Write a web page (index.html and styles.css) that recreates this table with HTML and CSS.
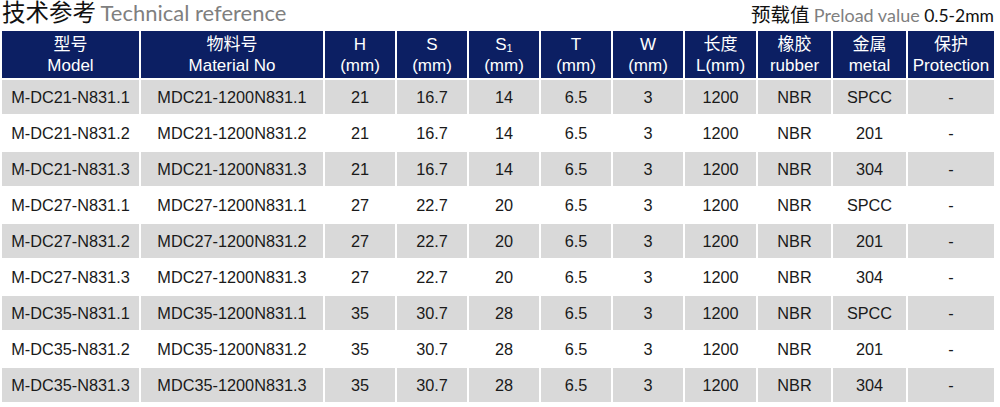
FILE: index.html
```html
<!DOCTYPE html>
<html lang="zh">
<head>
<meta charset="utf-8">
<title>技术参考</title>
<link rel="stylesheet" href="styles.css">
</head>
<body>
<div class="titlebar">
  <div class="title"><span class="cn-big">技术参考</span> <span class="en-gray">Technical reference</span></div>
  <div class="preload"><span class="cn-mid">预载值</span> <span class="en-gray small">Preload value</span> <span class="en-black">0.5-2mm</span></div>
</div>
<table class="spec">
  <colgroup>
    <col class="c1"><col class="c2"><col class="c3"><col class="c3"><col class="c3"><col class="c3"><col class="c3"><col class="c4"><col class="c5"><col class="c5"><col class="c6">
  </colgroup>
  <thead>
    <tr>
      <th>型号<br>Model</th>
      <th>物料号<br>Material No</th>
      <th>H<br>(mm)</th>
      <th>S<br>(mm)</th>
      <th>S<sub>1</sub><br>(mm)</th>
      <th>T<br>(mm)</th>
      <th>W<br>(mm)</th>
      <th>长度<br>L(mm)</th>
      <th>橡胶<br>rubber</th>
      <th>金属<br>metal</th>
      <th>保护<br>Protection</th>
    </tr>
  </thead>
  <tbody>
    <tr class="g"><td>M-DC21-N831.1</td><td>MDC21-1200N831.1</td><td>21</td><td>16.7</td><td>14</td><td>6.5</td><td>3</td><td>1200</td><td>NBR</td><td>SPCC</td><td>-</td></tr>
    <tr><td>M-DC21-N831.2</td><td>MDC21-1200N831.2</td><td>21</td><td>16.7</td><td>14</td><td>6.5</td><td>3</td><td>1200</td><td>NBR</td><td>201</td><td>-</td></tr>
    <tr class="g"><td>M-DC21-N831.3</td><td>MDC21-1200N831.3</td><td>21</td><td>16.7</td><td>14</td><td>6.5</td><td>3</td><td>1200</td><td>NBR</td><td>304</td><td>-</td></tr>
    <tr><td>M-DC27-N831.1</td><td>MDC27-1200N831.1</td><td>27</td><td>22.7</td><td>20</td><td>6.5</td><td>3</td><td>1200</td><td>NBR</td><td>SPCC</td><td>-</td></tr>
    <tr class="g"><td>M-DC27-N831.2</td><td>MDC27-1200N831.2</td><td>27</td><td>22.7</td><td>20</td><td>6.5</td><td>3</td><td>1200</td><td>NBR</td><td>201</td><td>-</td></tr>
    <tr><td>M-DC27-N831.3</td><td>MDC27-1200N831.3</td><td>27</td><td>22.7</td><td>20</td><td>6.5</td><td>3</td><td>1200</td><td>NBR</td><td>304</td><td>-</td></tr>
    <tr class="g"><td>M-DC35-N831.1</td><td>MDC35-1200N831.1</td><td>35</td><td>30.7</td><td>28</td><td>6.5</td><td>3</td><td>1200</td><td>NBR</td><td>SPCC</td><td>-</td></tr>
    <tr><td>M-DC35-N831.2</td><td>MDC35-1200N831.2</td><td>35</td><td>30.7</td><td>28</td><td>6.5</td><td>3</td><td>1200</td><td>NBR</td><td>201</td><td>-</td></tr>
    <tr class="g"><td>M-DC35-N831.3</td><td>MDC35-1200N831.3</td><td>35</td><td>30.7</td><td>28</td><td>6.5</td><td>3</td><td>1200</td><td>NBR</td><td>304</td><td>-</td></tr>
  </tbody>
</table>
</body>
</html>
```
FILE: styles.css
```css
html, body {
  margin: 0;
  padding: 0;
  background: #ffffff;
}
body {
  width: 1000px;
  height: 407px;
  overflow: hidden;
  font-family: "Liberation Sans", Arial, "Noto Sans CJK SC", sans-serif;
  color: #1a1a1a;
}
.titlebar {
  display: flex;
  justify-content: space-between;
  align-items: flex-end;
  height: 29px;
  padding: 0 6px 0 2px;
}
.title {
  line-height: 24px;
  white-space: nowrap;
  padding-bottom: 1px;
}
.cn-big {
  font-family: "Liberation Sans", "Noto Sans CJK SC", sans-serif;
  font-size: 23.5px;
  color: #111;
}
.en-gray {
  font-family: Lato, "Open Sans", sans-serif;
  font-size: 22px;
  color: #7f7f7f;
}
.preload {
  line-height: 22px;
  white-space: nowrap;
  padding-bottom: 1px;
}
.cn-mid {
  font-family: "Liberation Sans", "Noto Sans CJK SC", sans-serif;
  font-size: 19.5px;
  color: #111;
}
.en-gray.small {
  font-size: 18px;
}
.en-black {
  font-family: Lato, "Open Sans", sans-serif;
  font-size: 17.5px;
  color: #111;
}
.spec {
  table-layout: fixed;
  border-collapse: separate;
  border-spacing: 2px;
  width: 996px;
  font-size: 16.3px;
}
.c1 { width: 137px; }
.c2 { width: 182px; }
.c3 { width: 70px; }
.c4 { width: 71px; }
.c5 { width: 73px; }
.c6 { width: 86px; }
.spec th {
  background: #0c1f63;
  color: #ffffff;
  font-weight: normal;
  font-size: 17px;
  height: 47px;
  padding: 0;
  line-height: 21px;
  text-align: center;
  vertical-align: middle;
  font-family: "Liberation Sans", Arial, "Noto Sans CJK SC", sans-serif;
}
.spec th sub {
  font-size: 11px;
  vertical-align: -2px;
  line-height: 0;
}
.spec td {
  height: 34px;
  padding: 0;
  text-align: center;
  vertical-align: middle;
  white-space: nowrap;
}
.spec tr.g td {
  background: #d9d9d9;
}
```
